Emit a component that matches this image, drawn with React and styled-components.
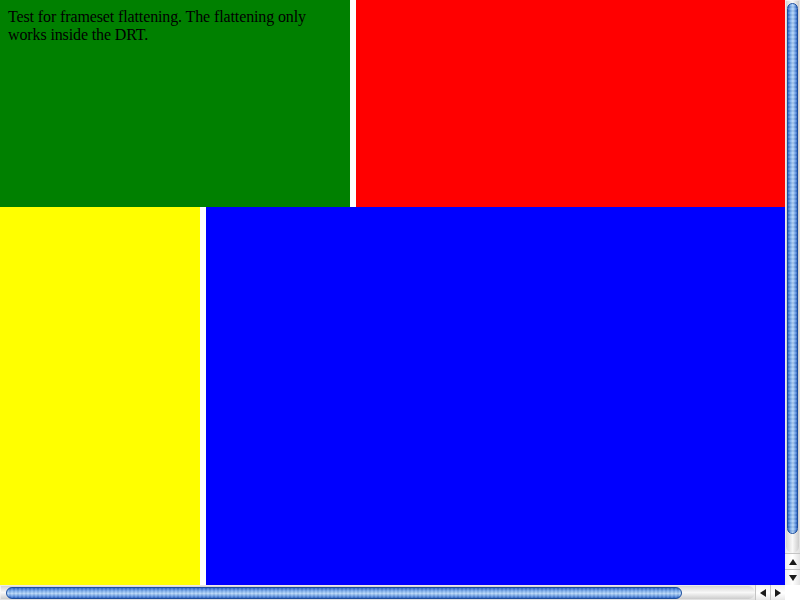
import React from "react";
import styled, { createGlobalStyle } from "styled-components";

const Global = createGlobalStyle`
  html, body { margin: 0; padding: 0; background: #fff; overflow: hidden; }
  #root { width: 800px; height: 600px; }
`;

const Screen = styled.div`
  width: 800px;
  height: 600px;
  display: grid;
  grid-template-columns: 785px 15px;
  grid-template-rows: 585px 15px;
  background: #fff;
`;

const Viewport = styled.div`
  display: flex;
  flex-direction: column;
  overflow: hidden;
`;

const Row = styled.div`
  display: flex;
  gap: 6px;
  background: #fff;
  height: ${(p) => p.$h};
  flex: ${(p) => (p.$grow ? "1" : "none")};
`;

const Frame = styled.div`
  background: ${(p) => p.$bg};
  width: ${(p) => p.$w || "auto"};
  flex: ${(p) => (p.$w ? "none" : "1")};
  padding: 8px;
  box-sizing: border-box;
  font-family: "Liberation Serif", "Times New Roman", serif;
  font-size: 16px;
  line-height: 18px;
  letter-spacing: -0.12px;
  color: #000;
`;

const VTrack = styled.div`
  background: linear-gradient(to right, #e8e8e8, #fafafa 40%, #e0e0e0);
  display: flex;
  flex-direction: column;
`;

const VTrough = styled.div`
  flex: 1;
  margin: 1px 1px 0 1px;
  border-radius: 0 0 7px 7px;
  background: linear-gradient(to right, #d4d4d4, #f8f8f8 50%, #cccccc);
  padding-top: 2px;
  display: flex;
  flex-direction: column;
`;

const VThumb = styled.div`
  height: 531px;
  margin: 0 1px;
  border-radius: 6px;
  border: 1px solid #1d4f9e;
  background: repeating-linear-gradient(to bottom, rgba(255,255,255,0.1) 0 2px, rgba(0,0,0,0.05) 2px 4px),
    linear-gradient(to right, #2a66cc, #7fb0ee 30%, #b4d5f8 55%, #6c9fe6 80%, #2b62c4);
  box-sizing: border-box;
`;

const ArrowBtn = styled.div`
  width: 15px;
  height: 16px;
  display: flex;
  align-items: center;
  justify-content: center;
  background: linear-gradient(${(p) => (p.$h ? "to bottom" : "to right")}, #f0f0f0, #fff 50%, #e4e4e4);
  border-${(p) => (p.$h ? "left" : "top")}: 1px solid #c4c4c4;
  box-sizing: border-box;
`;

const HTrack = styled.div`
  background: linear-gradient(to bottom, #e8e8e8, #fafafa 40%, #e0e0e0);
  display: flex;
`;

const HTrough = styled.div`
  flex: 1;
  margin: 1px 0 1px 1px;
  border-radius: 0 7px 7px 0;
  background: linear-gradient(to bottom, #d4d4d4, #f8f8f8 50%, #cccccc);
  padding-left: 5px;
  display: flex;
  align-items: center;
`;

const HThumb = styled.div`
  width: 676px;
  height: 12px;
  border-radius: 6px;
  border: 1px solid #1d4f9e;
  background: repeating-linear-gradient(to right, rgba(255,255,255,0.1) 0 2px, rgba(0,0,0,0.05) 2px 4px),
    linear-gradient(to bottom, #2a66cc, #7fb0ee 30%, #b4d5f8 55%, #6c9fe6 80%, #2b62c4);
  box-sizing: border-box;
`;

const Corner = styled.div`
  background: #fff;
`;

const Tri = ({ dir }) => {
  const pts = {
    up: "0,6 4,0 8,6",
    down: "0,0 8,0 4,6",
    left: "6,0 6,8 0,4",
    right: "0,0 6,4 0,8",
  }[dir];
  const horiz = dir === "left" || dir === "right";
  return (
    <svg width={horiz ? 6 : 8} height={horiz ? 8 : 6} viewBox={horiz ? "0 0 6 8" : "0 0 8 6"}>
      <polygon points={pts} fill="#1a1a1a" />
    </svg>
  );
};

export default function App() {
  return (
    <>
      <Global />
      <Screen>
        <Viewport>
          <Row $h="207px">
            <Frame $bg="#008000" $w="350px">
              Test for frameset flattening. The flattening only works inside the DRT.
            </Frame>
            <Frame $bg="#ff0000" />
          </Row>
          <Row $grow>
            <Frame $bg="#ffff00" $w="200px" />
            <Frame $bg="#0000ff" />
          </Row>
        </Viewport>
        <VTrack>
          <VTrough>
            <VThumb />
          </VTrough>
          <ArrowBtn>
            <Tri dir="up" />
          </ArrowBtn>
          <ArrowBtn>
            <Tri dir="down" />
          </ArrowBtn>
        </VTrack>
        <HTrack>
          <HTrough>
            <HThumb />
          </HTrough>
          <ArrowBtn $h>
            <Tri dir="left" />
          </ArrowBtn>
          <ArrowBtn $h>
            <Tri dir="right" />
          </ArrowBtn>
        </HTrack>
        <Corner />
      </Screen>
    </>
  );
}
